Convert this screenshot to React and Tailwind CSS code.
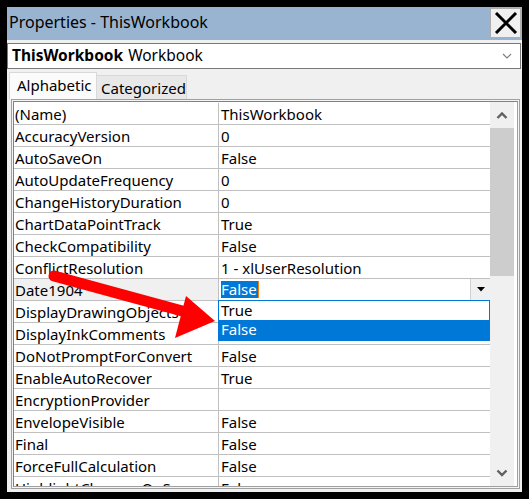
import React from 'react'

const font = { fontFamily: '"Noto Sans", "Open Sans", Arial, sans-serif' }

const rows = [
  ['(Name)', 'ThisWorkbook'],
  ['AccuracyVersion', '0'],
  ['AutoSaveOn', 'False'],
  ['AutoUpdateFrequency', '0'],
  ['ChangeHistoryDuration', '0'],
  ['ChartDataPointTrack', 'True'],
  ['CheckCompatibility', 'False'],
  ['ConflictResolution', '1 - xlUserResolution'],
  ['Date1904', 'False', 'edit'],
  ['DisplayDrawingObjects', ''],
  ['DisplayInkComments', ''],
  ['DoNotPromptForConvert', 'False'],
  ['EnableAutoRecover', 'True'],
  ['EncryptionProvider', ''],
  ['EnvelopeVisible', 'False'],
  ['Final', 'False'],
  ['ForceFullCalculation', 'False'],
  ['HighlightChangesOnScreen', 'False'],
]

function Chevron({ up, className }) {
  return (
    <svg width="12" height="8" viewBox="0 0 12 8" className={className}>
      <path d={up ? 'M1.5 7 L6 2.5 L10.5 7' : 'M1.5 1.5 L6 6 L10.5 1.5'} fill="none" stroke="#606060" strokeWidth="2.4" />
    </svg>
  )
}

function Row({ name, value, mode }) {
  const editing = mode === 'edit'
  return (
    <div className="flex h-[22px] shrink-0 border-b border-[#c0c0c0] text-[15px] leading-[22px]">
      <div className={`w-[205px] shrink-0 border-r border-[#c0c0c0] pl-[1px] whitespace-nowrap overflow-hidden ${editing ? 'bg-[#f0f0f0]' : ''}`}>
        {name}
      </div>
      <div className="flex-1 flex items-center pl-[2px] whitespace-nowrap overflow-hidden">
        {editing ? (
          <>
            <span className="bg-[#0078d7] text-white leading-[17px] pr-[1px] border-r border-[#f08000]">{value}</span>
            <div className="ml-auto w-[20px] h-[21px] bg-[#f0f0f0] border-l border-[#d0d0d0] flex items-center justify-center">
              <svg width="8" height="5" viewBox="0 0 8 5"><path d="M0 0 H8 L4 4.5 Z" fill="#000" /></svg>
            </div>
          </>
        ) : (
          value
        )}
      </div>
    </div>
  )
}

export default function App() {
  return (
    <div className="relative w-[529px] h-[499px] bg-black pt-[7px] pl-[7px] text-black" style={font}>
      <div className="w-[515px] h-[485px] bg-[#f0f0f0] flex flex-col">
        {/* title bar */}
        <div className="h-[33px] bg-[#99b4d1] flex items-start justify-between shrink-0">
          <span className="pl-[2px] text-[16px] leading-[31px]">Properties - ThisWorkbook</span>
          <div className="mt-[1px] mr-[1px] w-[31px] h-[30px] bg-[#f0f0f0] border border-[#adadad] flex items-center justify-center">
            <svg width="24" height="22" viewBox="0 0 24 22">
              <path d="M2 1 L22 21 M22 1 L2 21" stroke="#000" strokeWidth="3" />
            </svg>
          </div>
        </div>

        {/* object combo */}
        <div className="mt-[3px] mr-[1px] h-[26px] bg-white border border-[#7a7a7a] flex items-center pl-[4px] pr-[8px] text-[15.5px] shrink-0">
          <span className="font-bold">ThisWorkbook</span>
          <span className="ml-[5px]">Workbook</span>
          <svg className="ml-auto" width="10" height="6" viewBox="0 0 10 6">
            <path d="M1 1 L5 5 L9 1" fill="none" stroke="#808080" strokeWidth="1.2" />
          </svg>
        </div>

        {/* tabs */}
        <div className="mt-[3px] h-[27px] flex items-end pl-[2px] text-[15px] shrink-0">
          <div className="w-[88px] h-[27px] bg-[#fbfbfb] border border-b-0 border-[#d9d9d9] pl-[7px] leading-[25px]">Alphabetic</div>
          <div className="w-[90px] h-[24px] bg-[#e8e8e8] border border-l-0 border-b-0 border-[#d9d9d9] pl-[4px] leading-[24px]">Categorized</div>
        </div>

        {/* property grid */}
        <div className="ml-[4px] w-[509px] h-[390px] border border-[#a0a0a0] p-[1px] bg-[#f4f4f4] shrink-0">
          <div className="h-full border border-t-[#828282] border-l-[#828282] border-r-[#a0a0a0] border-b-[#a0a0a0] bg-white flex pr-[3px]">
            <div className="relative flex-1 flex flex-col overflow-hidden pt-[1px]">
              {rows.map(([n, v, m]) => (
                <Row key={n} name={n} value={v} mode={m} />
              ))}
              {/* open dropdown list */}
              <div className="absolute left-[204px] top-[198px] w-[272px] h-[41px] bg-white border border-[#0078d7] text-[15px] leading-[19px]">
                <div className="h-[19px] pl-[2px]">True</div>
                <div className="h-[20px] pl-[2px] bg-[#0078d7] text-white">False</div>
              </div>
            </div>
            <div className="w-[24px] bg-[#f0f0f0] flex flex-col shrink-0">
              <div className="h-[26px] flex items-center justify-center"><Chevron up /></div>
              <div className="h-[148px] bg-[#cdcdcd]" />
              <div className="flex-1" />
              <div className="h-[26px] flex items-center justify-center"><Chevron /></div>
            </div>
          </div>
        </div>
      </div>

      {/* red annotation arrow */}
      <svg className="absolute left-0 top-0 pointer-events-none" width="529" height="499" viewBox="0 0 529 499">
        <line x1="54" y1="276" x2="186" y2="312" stroke="#ff0000" strokeWidth="11" strokeLinecap="round" />
        <polygon points="186,296 215,321 175,338" fill="#ff0000" />
      </svg>
    </div>
  )
}
